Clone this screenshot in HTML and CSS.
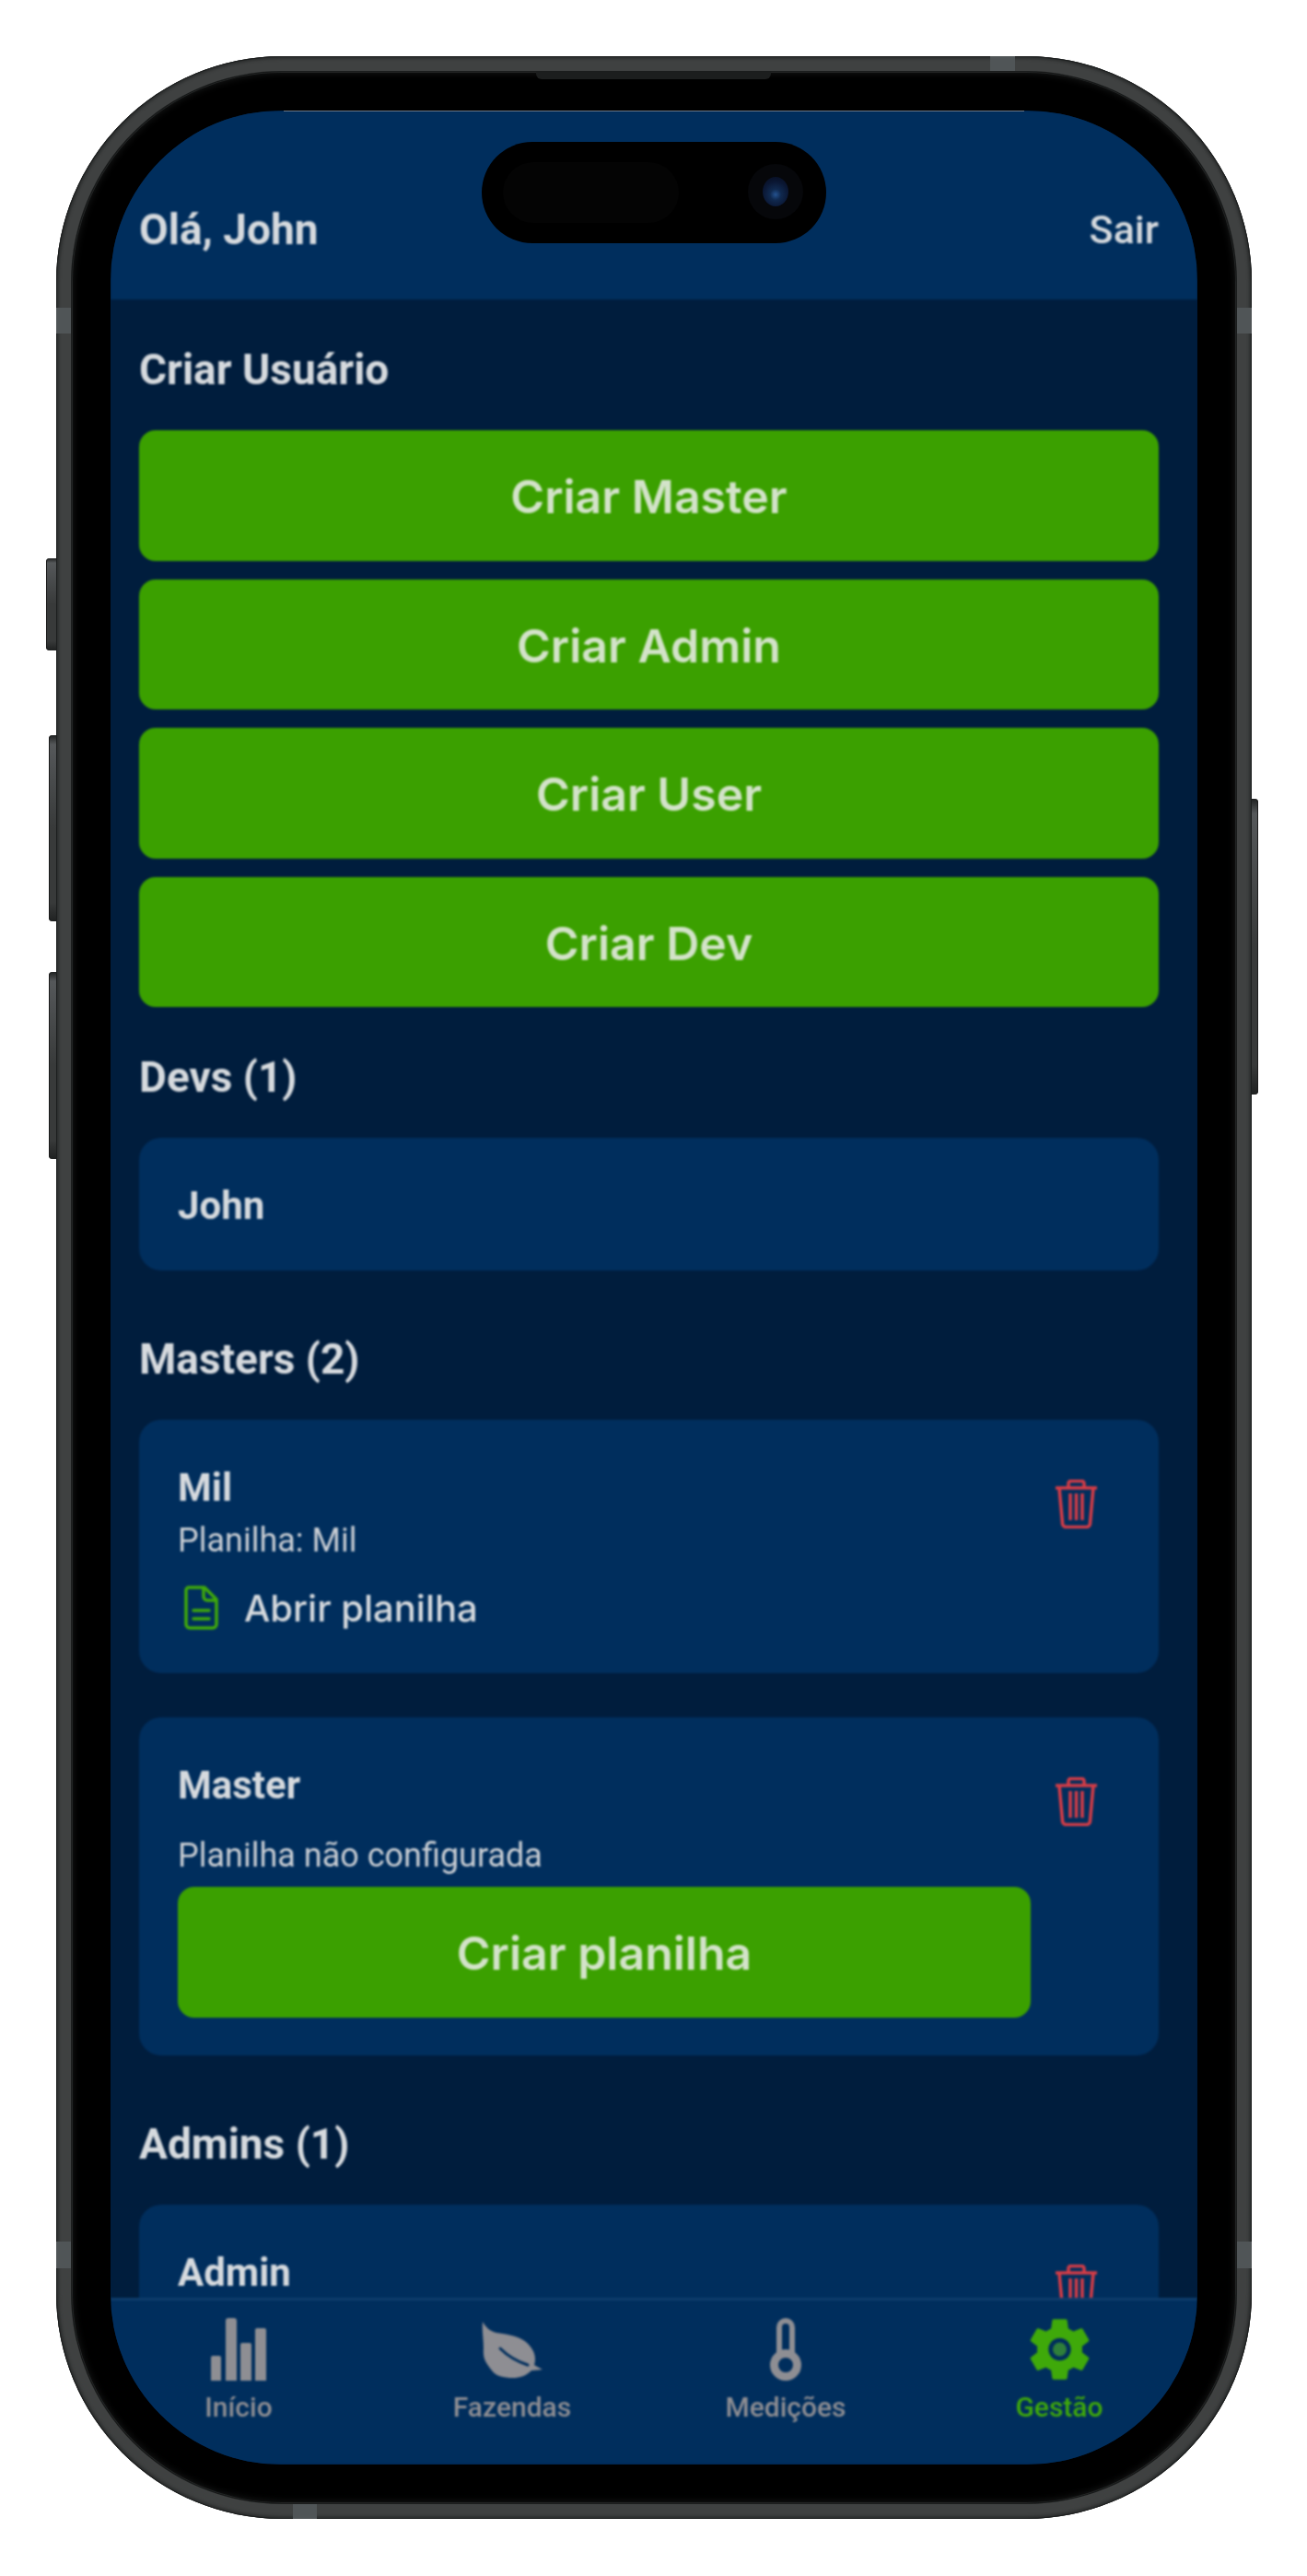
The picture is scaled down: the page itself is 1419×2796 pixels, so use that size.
FILE: index.html
```html
<!DOCTYPE html>
<html>
<head>
  <title>Gestão</title>
  <link rel="stylesheet" href="styles.css">
</head>
<body>
  <div class="phone">
    <!-- side buttons -->
    <span class="side-btn mute"></span>
    <span class="side-btn vol-up"></span>
    <span class="side-btn vol-down"></span>
    <span class="side-btn power"></span>
    <!-- antenna bands -->
    <span class="tick tick-top"></span>
    <span class="tick tick-left-1"></span>
    <span class="tick tick-right-1"></span>
    <span class="tick tick-left-2"></span>
    <span class="tick tick-right-2"></span>
    <span class="tick tick-bottom"></span>

    <div class="bezel">
      <span class="speaker"></span>
      <div class="screen">
        <div class="app">
          <header class="top-bar">
            <span class="greeting">Olá, John</span>
            <span class="logout">Sair</span>
          </header>

          <main class="content">
            <h2 class="section-title">Criar Usuário</h2>
            <div class="btn-group">
              <button class="button">Criar Master</button>
              <button class="button">Criar Admin</button>
              <button class="button">Criar User</button>
              <button class="button">Criar Dev</button>
            </div>

            <h2 class="section-title">Devs (1)</h2>
            <div class="card">
              <div class="card-body">
                <div class="card-name">John</div>
              </div>
            </div>

            <h2 class="section-title">Masters (2)</h2>
            <div class="card">
              <div class="card-body">
                <div class="card-name">Mil</div>
                <div class="card-sub sub-tight">Planilha: Mil</div>
                <div class="sheet-link">
                  <svg class="doc-icon" viewBox="0 0 37 48" fill="none" stroke="#3fa90a" stroke-width="3.500" stroke-linejoin="round" stroke-linecap="round">
                    <path d="M5 2 H22 L35 15 V42 a4 4 0 0 1 -4 4 H6 a4 4 0 0 1 -4 -4 V5 a3 3 0 0 1 3 -3 Z"/>
                    <path d="M21 3 V12 a4 4 0 0 0 4 4 H34"/>
                    <path d="M10 27 H27 M10 36 H27"/>
                  </svg>
                  <span>Abrir planilha</span>
                </div>
              </div>
              <div class="card-action">
                <svg class="trash-icon" viewBox="0 0 45 53" fill="none" stroke="#d63c46" stroke-width="3.500" stroke-linejoin="round">
                  <path d="M0 9 H45"/>
                  <path d="M14 8 V4 a2.500 2.500 0 0 1 2.500 -2.500 H28.500 a2.500 2.500 0 0 1 2.500 2.500 V8"/>
                  <path d="M4 9 L7.500 47 a4 4 0 0 0 4 4.500 H33.500 a4 4 0 0 0 4 -4.500 L41 9"/>
                  <path d="M16 15 V44 M22.500 15 V44 M29 15 V44"/>
                </svg>
              </div>
            </div>

            <div class="card">
              <div class="card-body">
                <div class="card-name">Master</div>
                <div class="card-sub sub-loose">Planilha não configurada</div>
                <button class="button card-button">Criar planilha</button>
              </div>
              <div class="card-action">
                <svg class="trash-icon" viewBox="0 0 45 53" fill="none" stroke="#d63c46" stroke-width="3.500" stroke-linejoin="round">
                  <path d="M0 9 H45"/>
                  <path d="M14 8 V4 a2.500 2.500 0 0 1 2.500 -2.500 H28.500 a2.500 2.500 0 0 1 2.500 2.500 V8"/>
                  <path d="M4 9 L7.500 47 a4 4 0 0 0 4 4.500 H33.500 a4 4 0 0 0 4 -4.500 L41 9"/>
                  <path d="M16 15 V44 M22.500 15 V44 M29 15 V44"/>
                </svg>
              </div>
            </div>

            <h2 class="section-title">Admins (1)</h2>
            <div class="card">
              <div class="card-body">
                <div class="card-name">Admin</div>
              </div>
              <div class="card-action">
                <svg class="trash-icon" viewBox="0 0 45 53" fill="none" stroke="#d63c46" stroke-width="3.500" stroke-linejoin="round">
                  <path d="M0 9 H45"/>
                  <path d="M14 8 V4 a2.500 2.500 0 0 1 2.500 -2.500 H28.500 a2.500 2.500 0 0 1 2.500 2.500 V8"/>
                  <path d="M4 9 L7.500 47 a4 4 0 0 0 4 4.500 H33.500 a4 4 0 0 0 4 -4.500 L41 9"/>
                  <path d="M16 15 V44 M22.500 15 V44 M29 15 V44"/>
                </svg>
              </div>
            </div>
          </main>

          <nav class="tab-bar">
            <div class="tab">
              <div class="tab-icon">
                <svg width="60" height="68" viewBox="0 0 60 68" fill="#8e8e93">
                  <path d="M0 43 a2 2 0 0 1 2 -2 H9 a2 2 0 0 1 2 2 V68 H0 Z"/>
                  <path d="M16 3 a3 3 0 0 1 3 -3 H25 a3 3 0 0 1 3 3 V68 H16 Z"/>
                  <path d="M32 29 a2 2 0 0 1 2 -2 H42 a2 2 0 0 1 2 2 V68 H32 Z"/>
                  <path d="M48 13 a2 2 0 0 1 2 -2 H58 a2 2 0 0 1 2 2 V68 H48 Z"/>
                </svg>
              </div>
              <span class="tab-label">Início</span>
            </div>
            <div class="tab">
              <div class="tab-icon">
                <svg width="66" height="62" viewBox="0 0 66 62">
                  <path fill="#8e8e93" d="M1 1 C5 8 9 11 16 13 C30 15 41 17 48 23 C56 30 60 38 57 48 L66 53 L54 54 C48 60 41 62 34 62 C24 62 15 60 11 54 C5 46 1 42 2 30 C2 20 0 10 1 1 Z"/>
                  <path fill="none" stroke="#002e5d" stroke-width="3" stroke-linecap="round" d="M20 30 C28 38 38 44 50 48"/>
                </svg>
              </div>
              <span class="tab-label">Fazendas</span>
            </div>
            <div class="tab">
              <div class="tab-icon">
                <svg width="34" height="68" viewBox="0 0 34 68">
                  <path fill="none" stroke="#8e8e93" stroke-width="6" d="M10 44 V10 a7 7 0 0 1 14 0 V44"/>
                  <circle cx="17" cy="51" r="12.500" fill="none" stroke="#8e8e93" stroke-width="9"/>
                </svg>
              </div>
              <span class="tab-label">Medições</span>
            </div>
            <div class="tab tab-active">
              <div class="tab-icon">
                <svg width="65" height="68" viewBox="2.500 2 19 20">
                  <path fill="#3fa90a" d="M19.140 12.940c.040-.300.060-.610.060-.940 0-.320-.020-.640-.070-.940l2.030-1.580a.490.490 0 0 0 .120-.610l-1.920-3.320a.488.488 0 0 0-.590-.220l-2.390.960c-.500-.380-1.030-.700-1.620-.940l-.360-2.540a.484.484 0 0 0-.480-.410h-3.840c-.240 0-.430.170-.470.410l-.360 2.540c-.590.240-1.130.570-1.620.940l-2.390-.960c-.220-.080-.470 0-.590.220L2.740 8.870c-.120.210-.080.470.120.610l2.030 1.580c-.050.300-.090.630-.090.940s.020.640.070.940l-2.030 1.580a.490.490 0 0 0-.120.610l1.920 3.320c.120.220.370.290.590.220l2.390-.960c.500.380 1.030.700 1.620.940l.360 2.540c.050.240.240.410.48.410h3.840c.240 0 .440-.17.470-.41l.360-2.540c.590-.24 1.130-.56 1.620-.94l2.390.96c.22.080.47 0 .59-.22l1.920-3.320c.12-.22.07-.47-.12-.61l-2.010-1.580zM12 15.600c-1.980 0-3.600-1.620-3.600-3.600s1.620-3.600 3.600-3.600 3.600 1.620 3.600 3.600-1.620 3.600-3.600 3.600z"/>
                  <circle cx="12" cy="12" r="2.200" fill="#2f7f3a"/>
                </svg>
              </div>
              <span class="tab-label">Gestão</span>
            </div>
          </nav>
        </div>
      </div>

      <!-- dynamic island -->
      <div class="island">
        <span class="island-sensor"></span>
        <span class="island-camera"><span class="island-lens"></span></span>
      </div>
    </div>
  </div>
</body>
</html>
```

FILE: styles.css
```css
body {
  margin: 0;
  height: 2796px;
  overflow: hidden;
  background-color: #fff;
  font-family: Roboto, "Liberation Sans", sans-serif;
}

/* device frame */
.phone {
  position: relative;
  box-sizing: border-box;
  width: 1298px;
  height: 2673px;
  margin: 61px 0 0 61px;
  padding: 17px;
  border-radius: 245px;
  background-color: #3f4141;
  box-shadow: inset 0 0 0 1px #1c1e1e, inset 0 0 3px 3px #2c2e2e;
}

.bezel {
  position: relative;
  box-sizing: border-box;
  height: 100%;
  padding: 42px;
  border-radius: 228px;
  background-color: #000;
  box-shadow: 0 0 0 1px #1b1d1d, inset 0 0 0 1px #222424, inset 0 0 10px #1f2121;
}

.side-btn {
  position: absolute;
  border-radius: 4px 0 0 4px;
  background: linear-gradient(to bottom, #1f2121, #55585a 5%, #383a3a 50%, #383a3a 90%, #1f2121 100%);
  box-shadow: inset 1px 0 0 #1a1a1a;
}

.mute { left: -11px; top: 545px; width: 11px; height: 100px; }
.vol-up { left: -8px; top: 737px; width: 8px; height: 202px; }
.vol-down { left: -8px; top: 994px; width: 8px; height: 203px; }

.power {
  right: -7px;
  top: 806px;
  width: 7px;
  height: 321px;
  border-radius: 0 4px 4px 0;
  box-shadow: inset -1px 0 0 #1a1a1a;
}

.tick {
  position: absolute;
  background-color: #505557;
}

.tick-top { left: 1014px; top: 0; width: 27px; height: 17px; }
.tick-left-1 { left: 0; top: 273px; width: 16px; height: 28px; }
.tick-right-1 { right: 0; top: 273px; width: 16px; height: 28px; }
.tick-left-2 { left: 0; top: 2372px; width: 16px; height: 29px; }
.tick-right-2 { right: 0; top: 2372px; width: 16px; height: 29px; }
.tick-bottom { left: 257px; bottom: 0; width: 26px; height: 16px; }

.speaker {
  position: absolute;
  left: 504px;
  top: 0;
  width: 255px;
  height: 8px;
  border-radius: 0 0 6px 6px;
  background-color: #1c1e1e;
}

.island {
  position: absolute;
  left: 445px;
  top: 76px;
  width: 374px;
  height: 110px;
  border-radius: 55px;
  background-color: #000;
}

.island-sensor {
  position: absolute;
  left: 23px;
  top: 22px;
  width: 191px;
  height: 66px;
  border-radius: 33px;
  background-color: #040404;
}

.island-camera {
  position: absolute;
  left: 289px;
  top: 24px;
  display: flex;
  align-items: center;
  justify-content: center;
  width: 60px;
  height: 60px;
  border-radius: 50%;
  background-color: #06070a;
}

.island-lens {
  width: 28px;
  height: 32px;
  border-radius: 50%;
  background: radial-gradient(circle at 50% 60%, #24528f 0, #10294f 25%, #0a1632 60%, #070c1c 100%);
}

/* screen */
.screen {
  position: relative;
  height: 100%;
  overflow: hidden;
  border-radius: 185px;
  background-color: #001d3d;
}

.screen::after {
  content: "";
  position: absolute;
  left: 188px;
  right: 188px;
  top: 0;
  height: 1px;
  background-color: #6b7a8a;
}

.app {
  display: flex;
  flex-direction: column;
  height: 100%;
  filter: blur(1px);
}

.top-bar {
  display: flex;
  flex-shrink: 0;
  justify-content: space-between;
  align-items: center;
  box-sizing: border-box;
  height: 205px;
  padding: 52px 42px 0 31px;
  background-color: #002e5d;
  color: #d6dade;
}

.greeting {
  font-size: 46px;
  font-weight: 700;
}

.logout {
  font-size: 43px;
  font-weight: 500;
}

.content {
  flex: 1;
  min-height: 0;
  overflow: hidden;
  padding: 28px 42px 0 31px;
  background-color: #001d3d;
  color: #d6dade;
}

.section-title {
  margin: 0 0 41px;
  padding-top: 23px;
  font-size: 46px;
  font-weight: 700;
  line-height: 50px;
}

.btn-group {
  display: flex;
  flex-direction: column;
  gap: 20px;
  margin-bottom: 28px;
}

.button {
  display: block;
  width: 100%;
  height: 141.500px;
  padding: 3px 0 0;
  border: none;
  border-radius: 18px;
  background-color: #3ba000;
  color: #d3e3c9;
  font-family: Inter, "Liberation Sans", sans-serif;
  font-size: 50px;
  font-weight: 600;
}

.card {
  display: flex;
  margin-bottom: 48px;
  border-radius: 24px;
  background-color: #002e5d;
}

.card-body {
  flex: 1;
  min-width: 0;
  padding: 44px 0 41px 42px;
}

.card-name {
  font-size: 42px;
  font-weight: 700;
  line-height: 59px;
}

.card-sub {
  font-size: 36px;
  line-height: 43px;
  color: #c9ced4;
}

.sub-tight { margin-top: 7px; }
.sub-loose { margin-top: 26px; }

.sheet-link {
  display: flex;
  align-items: center;
  gap: 28px;
  height: 60px;
  margin-top: 21px;
  padding-left: 7px;
  font-family: Inter, "Liberation Sans", sans-serif;
  font-size: 40px;
  font-weight: 500;
}

.doc-icon {
  flex-shrink: 0;
  width: 37px;
  height: 48px;
}

.card-button {
  margin-top: 12px;
}

.card-action {
  flex-shrink: 0;
  box-sizing: border-box;
  width: 139px;
  padding: 65px 0 0 27px;
}

.trash-icon {
  display: block;
  width: 45px;
  height: 53px;
}

/* bottom tabs */
.tab-bar {
  display: flex;
  flex-shrink: 0;
  justify-content: space-between;
  box-sizing: border-box;
  height: 181px;
  padding: 19px 65px 0 54px;
  border-top: 3px solid #0d3c6b;
  background-color: #002e5d;
  color: #8e8e93;
}

.tab {
  display: flex;
  flex-direction: column;
  align-items: center;
  width: 170px;
}

.tab-icon {
  display: flex;
  align-items: center;
  justify-content: center;
  height: 68px;
}

.tab-label {
  margin-top: 11px;
  font-size: 30px;
  font-weight: 500;
  line-height: 36px;
}

.tab-active {
  color: #3fa90a;
}
```
